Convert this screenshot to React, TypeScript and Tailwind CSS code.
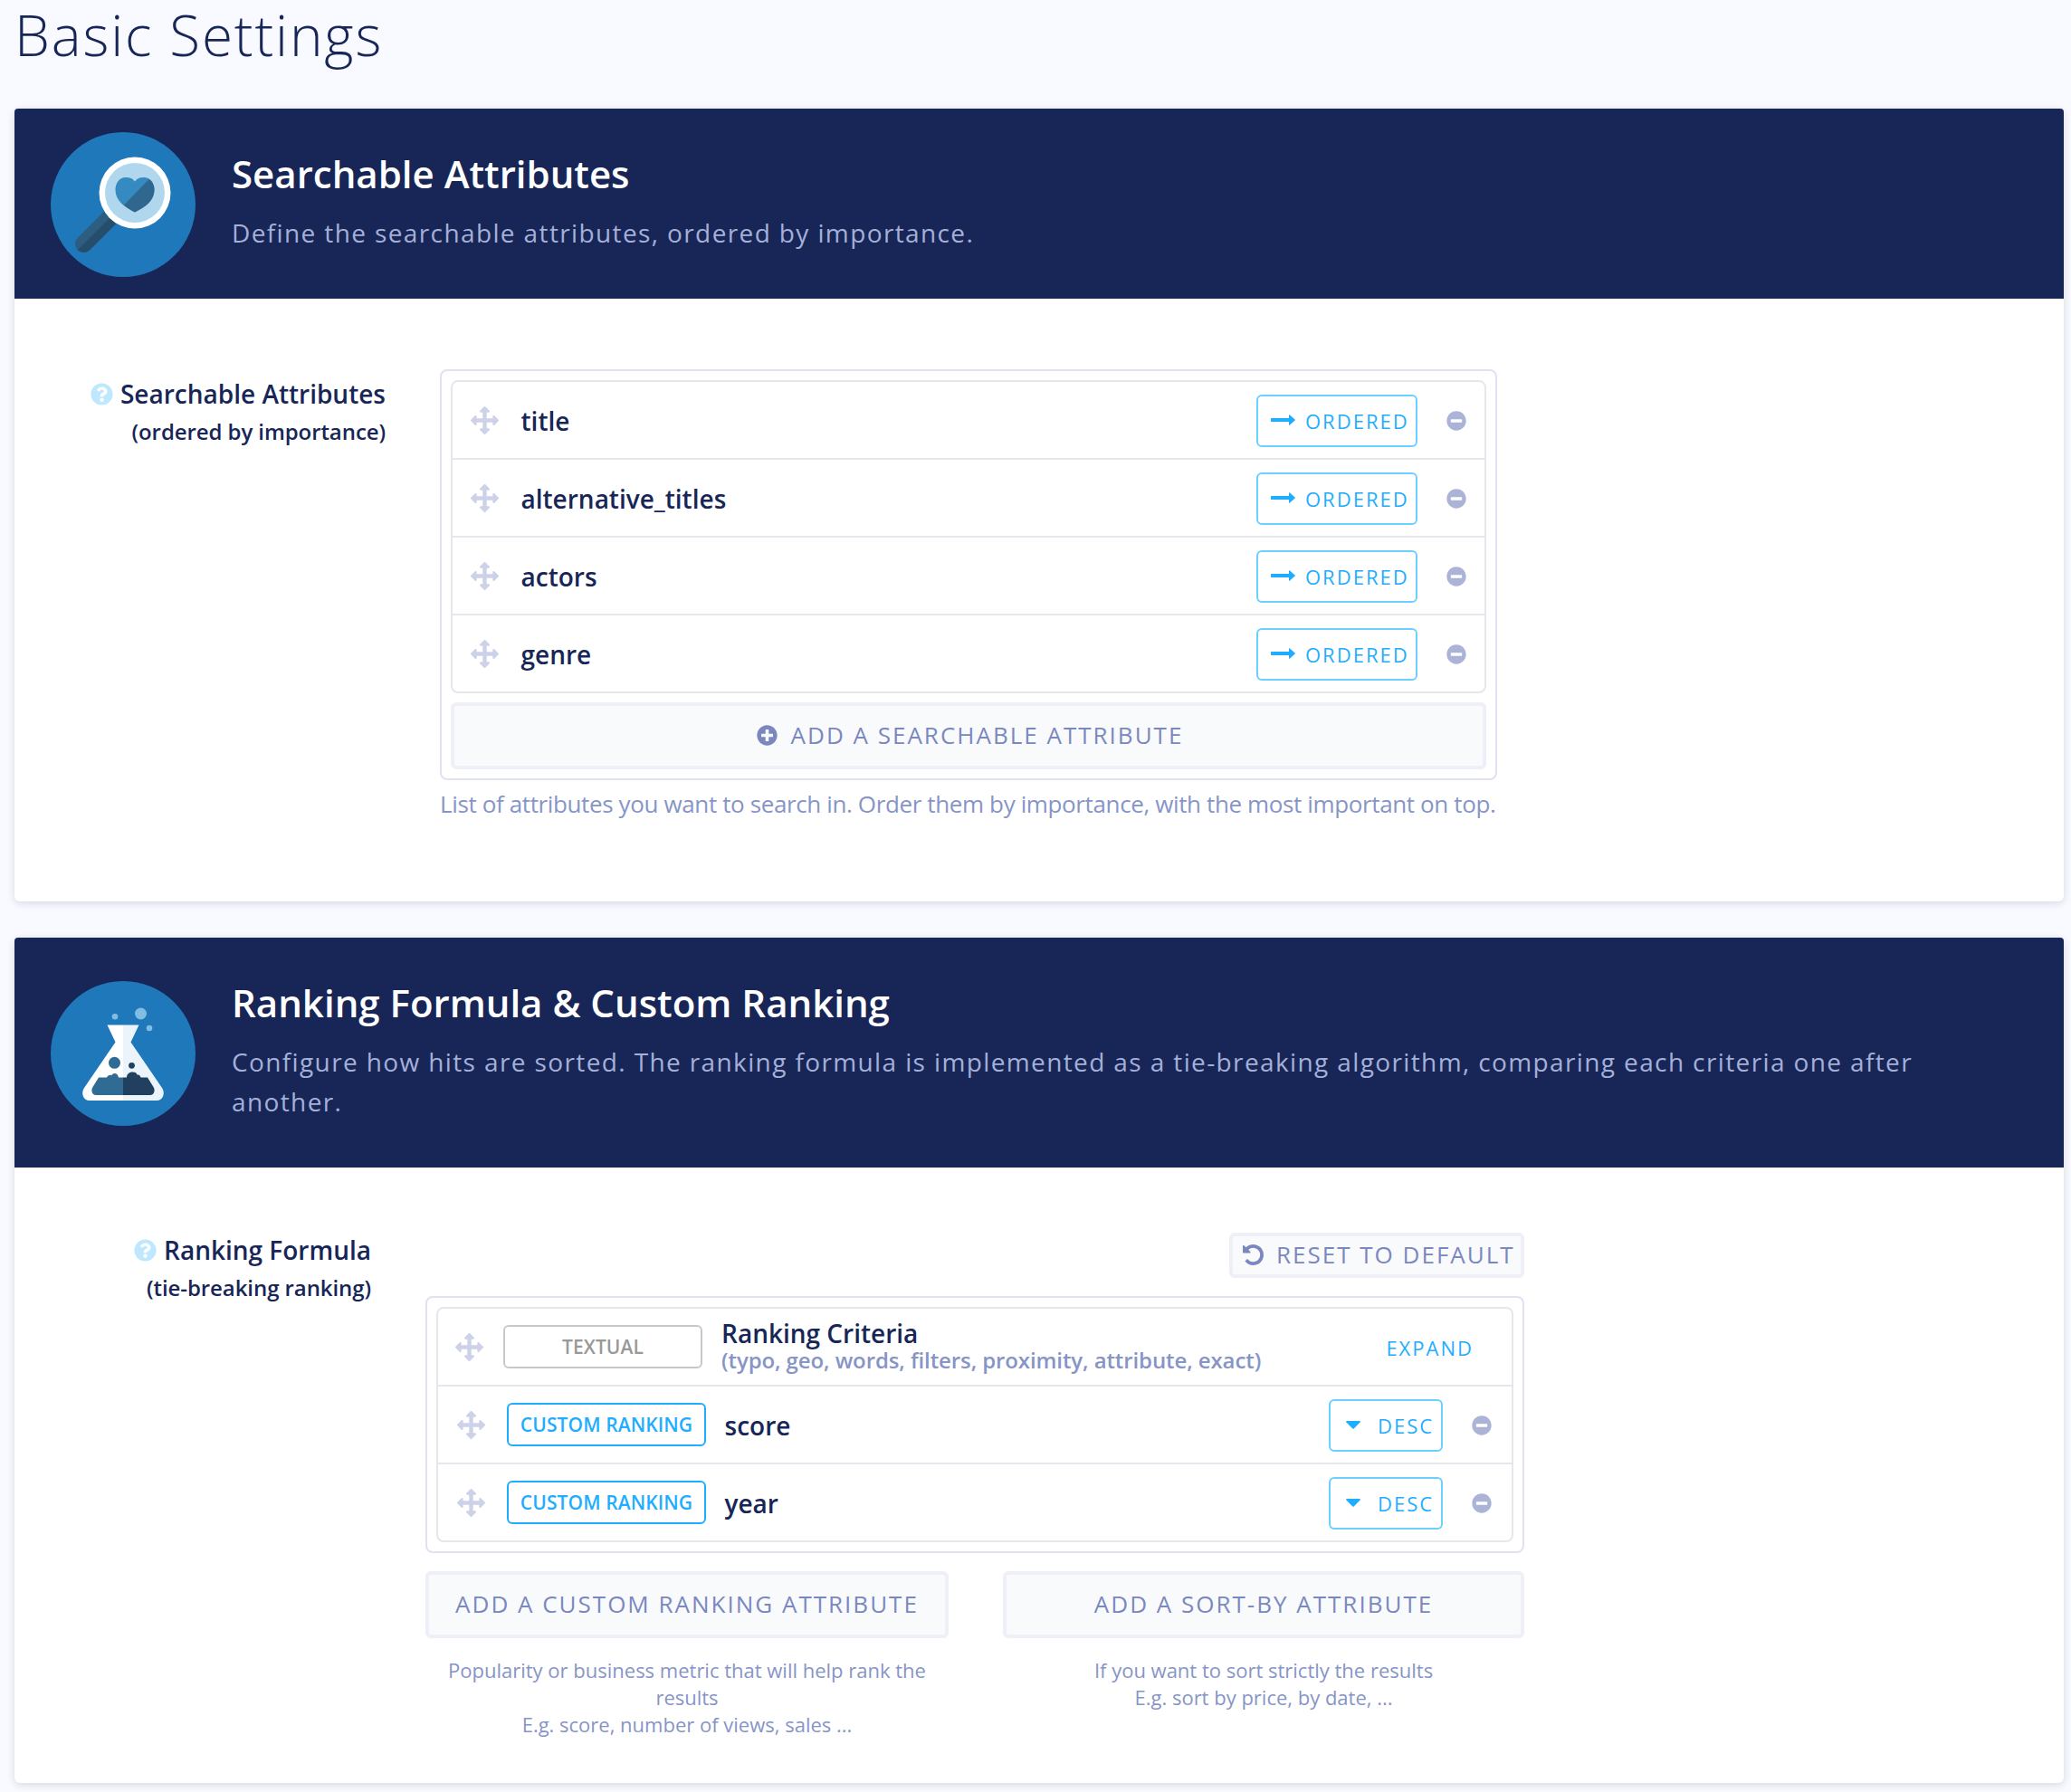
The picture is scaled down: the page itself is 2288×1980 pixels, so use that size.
import React from "react";
import { FaMinusCircle, FaPlusCircle, FaQuestionCircle } from "react-icons/fa";

function MagnifierIcon() {
  return (
    <svg viewBox="0 0 160 160" className="h-40 w-40 shrink-0">
      <circle cx="80" cy="80" r="80" fill="#1e78ba" />
      <path d="M36.500 123.500 L74 86" stroke="#2d5e82" strokeWidth="19" strokeLinecap="round" />
      <path d="M29.800 130.200 A9.500 9.500 0 0 0 43.200 130.200 L80.700 92.700 L74 86 Z" fill="#264d6b" />
      <circle cx="93" cy="67" r="39.500" fill="#ffffff" />
      <circle cx="93" cy="67" r="33" fill="#b1d7ee" />
      <path d="M93 54.500 C90 50.500 86 50 83 50 C76 50 71.500 56 71.500 64 C71.500 76 82 83 93 88.500 C104 83 114.500 76 114.500 64 C114.500 56 110 50 103 50 C100 50 96 50.500 93 54.500 Z" fill="#348ac1" />
      <path d="M108.600 52 C112.500 54.500 114.500 59 114.500 64 C114.500 76 104 83 93 88.500 C89 86.500 84.500 84 81 80.500 Z" fill="#2f678e" />
    </svg>
  );
}

function FlaskIcon() {
  return (
    <svg viewBox="0 0 160 160" className="h-40 w-40 shrink-0">
      <circle cx="80" cy="80" r="80" fill="#1e78ba" />
      <circle cx="71" cy="39.300" r="3.300" fill="#81bde2" />
      <circle cx="99.500" cy="36" r="6.500" fill="#81bde2" />
      <circle cx="109" cy="52" r="3.300" fill="#81bde2" />
      <path d="M62.500 48.500 H80 V132 H43 C36 132 33 124 37 118 L71.500 67.500 Z" fill="#ffffff" />
      <path d="M80 48.500 H97.500 L88.500 67.500 L123 118 C127 124 124 132 117 132 H80 Z" fill="#ebf3fb" />
      <path d="M53 106.500 H62 C63 104 66 103.500 67.500 104 C69 101 74 101 75 106.500 H80 V126 H50 C46 126 44 121 46.500 117 Z" fill="#306b94" />
      <path d="M80 106.500 H84 C84 99 95 99 95.500 103.500 C98 103 99 104.500 99.500 106.500 H107 L113.500 117 C116 121 114 126 110 126 H80 Z" fill="#21405f" />
      <circle cx="70.500" cy="90.300" r="6.500" fill="#306b94" />
      <circle cx="89.500" cy="93.300" r="3.400" fill="#21405f" />
    </svg>
  );
}

function UndoIcon() {
  return (
    <svg viewBox="128 128 1536 1536" className="h-[23px] w-[23px] shrink-0" fill="currentColor">
      <path d="M1664 896q0 156-61 298t-164 245-245 164-298 61q-172 0-327-72.500t-264-204.500q-7-10-6.500-22.500t8.500-20.500l137-138q10-9 25-9 16 2 23 12 73 95 179 147t225 52q104 0 198.500-40.500t163.500-109.500 109.500-163.500 40.500-198.500-40.500-198.500-109.500-163.500-163.500-109.500-198.500-40.500q-98 0-188 35.500t-160 101.500l137 138q31 30 14 69-17 40-59 40h-448q-26 0-45-19t-19-45v-448q0-42 40-59 39-17 69 14l130 129q107-101 244.500-156.500t284.500-55.500q156 0 298 61t245 164 164 245 61 298z" />
    </svg>
  );
}

function DragHandle() {
  return (
    <svg viewBox="0 0 1792 1792" className="-mt-px h-[31px] w-[31px] shrink-0" fill="#cdd2e8">
      <path d="M1792 896q0 26-19 45l-256 256q-19 19-45 19t-45-19-19-45v-128h-384v384h128q26 0 45 19t19 45-19 45l-256 256q-19 19-45 19t-45-19l-256-256q-19-19-19-45t19-45 45-19h128v-384h-384v128q0 26-19 45t-45 19-45-19l-256-256q-19-19-19-45t19-45l256-256q19-19 45-19t45 19 19 45v128h384v-384h-128q-26 0-45-19t-19-45 19-45l256-256q19-19 45-19t45 19l256 256q19 19 19 45t-19 45-45 19h-128v384h384v-128q0-26 19-45t45-19 45 19l256 256q19 19 19 45z" />
    </svg>
  );
}

function LongArrow() {
  return (
    <svg viewBox="0 0 27 12" className="mb-0.5 mr-[11px] h-3 w-[27px] shrink-0" fill="currentColor">
      <path d="M0.500 4 H20 V0.800 Q20 -0.300 21 0.400 L26.600 5.500 Q27.100 6 26.600 6.500 L21 11.600 Q20 12.300 20 11.200 V8 H0.500 Q0 8 0 7.500 V4.500 Q0 4 0.500 4 Z" />
    </svg>
  );
}

function Caret() {
  return (
    <svg viewBox="0 0 16 9" className="mb-px mr-[19px] h-[9px] w-4 shrink-0" fill="currentColor">
      <path d="M1 0 H15 Q16.400 0.200 15.600 1.400 L8.700 8.500 Q8 9.200 7.300 8.500 L0.400 1.400 Q-0.400 0.200 1 0 Z" />
    </svg>
  );
}

function CardHeader({
  icon,
  title,
  children,
  className,
  textClassName,
}: {
  icon: React.ReactNode;
  title: string;
  children: React.ReactNode;
  className: string;
  textClassName: string;
}) {
  return (
    <header className={`flex items-start rounded-t bg-[#172657] pl-10 ${className}`}>
      {icon}
      <div className={`ml-10 w-[1880px] ${textClassName}`}>
        <h2 className="text-[42px] leading-[54px] font-semibold whitespace-nowrap text-white">{title}</h2>
        <p className="mt-4 text-[28px] leading-[44px] tracking-[1.38px] text-[#a5b0d8]">{children}</p>
      </div>
    </header>
  );
}

function FieldLabel({ title, hint }: { title: string; hint: string }) {
  return (
    <div className="flex flex-col items-end font-semibold whitespace-nowrap text-[#172657]">
      <div className="flex items-center gap-2 text-[28px] leading-[40px]">
        <FaQuestionCircle className="h-[25px] w-[25px] text-[#bfe8ff]" />
        <span>{title}</span>
      </div>
      <div className="mt-px text-[24px] leading-[42px] tracking-[-0.08px]">{hint}</div>
    </div>
  );
}

function Tag({ children, muted }: { children: React.ReactNode; muted?: boolean }) {
  return (
    <span
      className={`-mt-0.5 flex h-12 w-[220px] items-center justify-center rounded-md border-2 pt-0.5 text-[21px] font-semibold tracking-[0.1px] whitespace-nowrap ${
        muted ? "border-[#c8c8c8] text-[#999999]" : "border-[#1fadff] text-[#1fadff]"
      }`}
    >
      {children}
    </span>
  );
}

function OutlineButton({ children, className }: { children: React.ReactNode; className: string }) {
  return (
    <button className={`flex h-[58px] items-center rounded-md border-2 border-[#6ccfff] text-[22px] tracking-[2px] text-[#1fadff] ${className}`}>
      {children}
    </button>
  );
}

function SoftButton({ children, className }: { children: React.ReactNode; className: string }) {
  return (
    <button className={`flex items-center rounded-md border-4 border-[#eeeff7] bg-[#f9fafc] pb-0.5 text-[26px] tracking-[2px] whitespace-nowrap text-[#7a88bf] ${className}`}>
      {children}
    </button>
  );
}

const attributes = ["title", "alternative_titles", "actors", "genre"];
const rankings = ["score", "year"];

export default function App() {
  return (
    <main className="h-[1980px] w-[2288px] overflow-hidden bg-[#f9faff] pr-2 pl-4 font-['Open_Sans',sans-serif]">
      <h1 className="h-[120px] text-[62px] leading-[76px] font-light tracking-[1.85px] text-[#172657]">Basic Settings</h1>

      <section className="h-[876px] rounded-md bg-white shadow-[0_2px_8px_rgba(24,38,87,0.16)]">
        <CardHeader className="h-[210px] pt-[26px]" textClassName="pt-[19px]" icon={<MagnifierIcon />} title="Searchable Attributes">
          Define the searchable attributes, ordered by importance.
        </CardHeader>
        <div className="flex pt-[78px]">
          <div className="w-[410px] pt-[7px]">
            <FieldLabel title="Searchable Attributes" hint="(ordered by importance)" />
          </div>
          <div className="ml-[60px] w-[1168px]">
            <div className="rounded-lg border-2 border-[#dfe2f1] p-2.5">
              <ul className="divide-y-2 divide-[#e4e8ed] rounded-lg border-2 border-[#e4e8ed]">
                {attributes.map((name, i) => (
                  <li key={name} className={`flex items-center pt-0.5 pr-5 pl-5 ${i < 3 ? "h-[86px]" : "h-[84px]"}`}>
                    <DragHandle />
                    <span className="ml-[24.5px] flex-1 text-[28px] font-semibold text-[#172657]">{name}</span>
                    <OutlineButton className="w-[178px] pl-3.5">
                      <LongArrow />
                      ORDERED
                    </OutlineButton>
                    <FaMinusCircle className="ml-8 h-[22px] w-[22px] text-[#abb3d7]" />
                  </li>
                ))}
              </ul>
              <SoftButton className="mt-2.5 h-[74px] w-full justify-center pl-[3px]">
                <FaPlusCircle className="mr-[15px] h-[23px] w-[23px]" />
                ADD A SEARCHABLE ATTRIBUTE
              </SoftButton>
            </div>
            <p className="mt-1.5 text-[26px] leading-10 tracking-[-0.375px] whitespace-nowrap text-[#8795c6]">
              List of attributes you want to search in. Order them by importance, with the most important on top.
            </p>
          </div>
        </div>
      </section>

      <section className="mt-10 h-[934px] rounded-md bg-white shadow-[0_2px_8px_rgba(24,38,87,0.16)]">
        <CardHeader className="h-[254px] pt-12" textClassName="-mt-[3px]" icon={<FlaskIcon />} title="Ranking Formula &amp; Custom Ranking">
          Configure how hits are sorted. The ranking formula is implemented as a tie-breaking algorithm, comparing each criteria one after another.
        </CardHeader>
        <div className="flex pt-[72px]">
          <div className="-mt-px w-[394px]">
            <FieldLabel title="Ranking Formula" hint="(tie-breaking ranking)" />
          </div>
          <div className="ml-[60px] w-[1214px]">
            <div className="flex justify-end">
              <SoftButton className="h-[50px] w-[326px] pl-[11px]">
                <span className="mr-[14px]">
                  <UndoIcon />
                </span>
                RESET TO DEFAULT
              </SoftButton>
            </div>
            <div className="mt-5 rounded-lg border-2 border-[#dfe2f1] p-2.5">
              <ul className="divide-y-2 divide-[#e4e8ed] rounded-lg border-2 border-[#e4e8ed]">
                <li className="flex h-[86px] items-center pt-0.5 pr-[42px] pl-[19px]">
                  <DragHandle />
                  <div className="ml-[22px]">
                    <Tag muted>TEXTUAL</Tag>
                  </div>
                  <div className="-mt-0.5 ml-[21px] flex-1 font-semibold">
                    <div className="text-[28px] leading-7 text-[#172657]">Ranking Criteria</div>
                    <div className="text-[24px] leading-[31px] tracking-[-0.1px] text-[#8795c6]">(typo, geo, words, filters, proximity, attribute, exact)</div>
                  </div>
                  <span className="text-[22px] tracking-[2px] text-[#1fadff]">EXPAND</span>
                </li>
                {rankings.map((name, i) => (
                  <li key={name} className={`flex items-center pt-0.5 pr-[22px] pl-[21px] ${i < 1 ? "h-[86px]" : "h-[84px]"}`}>
                    <DragHandle />
                    <div className="ml-6">
                      <Tag>CUSTOM RANKING</Tag>
                    </div>
                    <span className="ml-[20.5px] flex-1 text-[28px] font-semibold text-[#172657]">{name}</span>
                    <OutlineButton className="w-[126px] pl-[17px]">
                      <Caret />
                      DESC
                    </OutlineButton>
                    <FaMinusCircle className="ml-8 h-[22px] w-[22px] text-[#abb3d7]" />
                  </li>
                ))}
              </ul>
            </div>
            <div className="mt-5 flex justify-between text-center text-[22px] leading-[30px] text-[#8795c6]">
              <div className="w-[578px]">
                <SoftButton className="h-[74px] w-full justify-center">ADD A CUSTOM RANKING ATTRIBUTE</SoftButton>
                <p className="mt-5 px-5">
                  Popularity or business metric that will help rank the results
                  <br />
                  E.g. score, number of views, sales ...
                </p>
              </div>
              <div className="w-[576px]">
                <SoftButton className="h-[74px] w-full justify-center">ADD A SORT-BY ATTRIBUTE</SoftButton>
                <p className="mt-5">
                  If you want to sort strictly the results
                  <br />
                  E.g. sort by price, by date, ...
                </p>
              </div>
            </div>
          </div>
        </div>
      </section>
    </main>
  );
}
